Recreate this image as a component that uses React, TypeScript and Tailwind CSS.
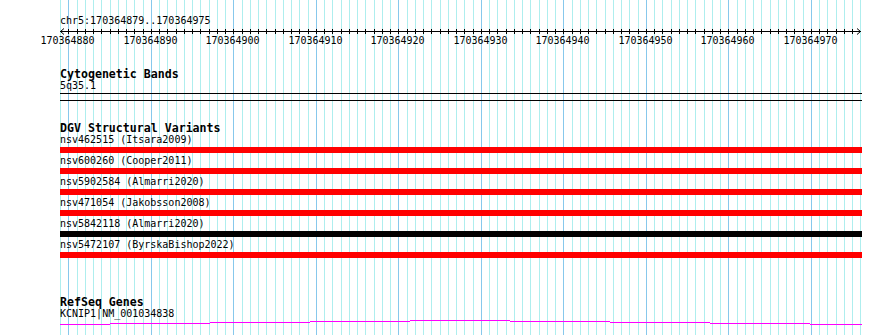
import React from 'react';

const MONO = "font-['DejaVu_Sans_Mono','Liberation_Mono',monospace]";

const START = 170364879;
const PX_PER_BP = 8.25;
const LEFT = 60;
const TRACK_W = 802;

const gridX = (k: number) => Math.round(LEFT + PX_PER_BP * k) + 0.5;

const variants = [
  { name: 'nsv462515 (Itsara2009)', color: 'bg-[#ff0000]' },
  { name: 'nsv600260 (Cooper2011)', color: 'bg-[#ff0000]' },
  { name: 'nsv5902584 (Almarri2020)', color: 'bg-[#ff0000]' },
  { name: 'nsv471054 (Jakobsson2008)', color: 'bg-[#ff0000]' },
  { name: 'nsv5842118 (Almarri2020)', color: 'bg-black' },
  { name: 'nsv5472107 (ByrskaBishop2022)', color: 'bg-[#ff0000]' },
];

function Grid() {
  const lines = Array.from({ length: 98 }, (_, k) => k);
  return (
    <svg className="absolute inset-0" width={890} height={335}>
      {lines.map(k => (
        <line
          key={k}
          x1={gridX(k)}
          x2={gridX(k)}
          y1={0}
          y2={335}
          stroke={(k - 1) % 10 === 0 ? '#87c8ec' : '#aeeeee'}
          strokeWidth={1}
        />
      ))}
    </svg>
  );
}

function Ruler() {
  const ticks = Array.from({ length: 98 }, (_, k) => k);
  const labels = Array.from({ length: 10 }, (_, i) => 1 + i * 10);
  return (
    <svg width={890} height={20} className="-ml-[60px] block">
      <line x1={60} x2={861} y1={4.5} y2={4.5} stroke="#000" />
      <polyline points="64,1.5 60.5,4.5 64,7.5" fill="none" stroke="#000" />
      <polyline points="857,1.5 860.5,4.5 857,7.5" fill="none" stroke="#000" />
      {ticks.slice(1, 97).map(k => (
        <line key={k} x1={gridX(k)} x2={gridX(k)} y1={2} y2={7} stroke="#000" />
      ))}
      {labels.map(k => (
        <text
          key={k}
          x={gridX(k) - 1}
          y={16.5}
          textAnchor="middle"
          fontSize={10}
          fontFamily="'DejaVu Sans Mono', 'Liberation Mono', monospace"
          fill="#000"
        >
          {START + k}
        </text>
      ))}
    </svg>
  );
}

function GeneLine() {
  const segs = [
    [0, 50, 4.5],
    [50, 150, 3.5],
    [150, 250, 2.5],
    [250, 350, 1.5],
    [350, 450, 0.5],
    [450, 550, 1.5],
    [550, 650, 2.5],
    [650, 750, 3.5],
    [750, 802, 4.5],
  ];
  return (
    <svg width={TRACK_W} height={6} className="block">
      {segs.map(([a, b, y], i) => (
        <line key={i} x1={a} x2={b} y1={y} y2={y} stroke="#ff00ff" />
      ))}
    </svg>
  );
}

export default function App() {
  return (
    <div className={`relative w-[890px] h-[335px] overflow-hidden bg-white text-black ${MONO}`}>
      <Grid />
      <div className="relative pl-[60px] w-[862px]">
        <div className="pt-[15px] text-[10px] leading-[12px]">chr5:170364879..170364975</div>
        <Ruler />

        <div className="mt-[21px] text-[11.6px] leading-[12px] font-bold">Cytogenetic Bands</div>
        <div className="text-[10px] leading-[12px]">5q35.1</div>
        <div className="mt-px h-px bg-black" />
        <div className="mt-[6px] h-px bg-black" />

        <div className="mt-[21px] text-[11.6px] leading-[12px] font-bold">DGV Structural Variants</div>
        {variants.map(v => (
          <div key={v.name} className="pb-[2px]">
            <div className="text-[10px] leading-[12px]">{v.name}</div>
            <div className={`mt-px h-[6px] ${v.color}`} />
          </div>
        ))}

        <div className="mt-[36px] text-[11.6px] leading-[12px] font-bold">RefSeq Genes</div>
        <div className="text-[10px] leading-[12px]">KCNIP1|NM_001034838</div>
        <GeneLine />
      </div>
    </div>
  );
}
